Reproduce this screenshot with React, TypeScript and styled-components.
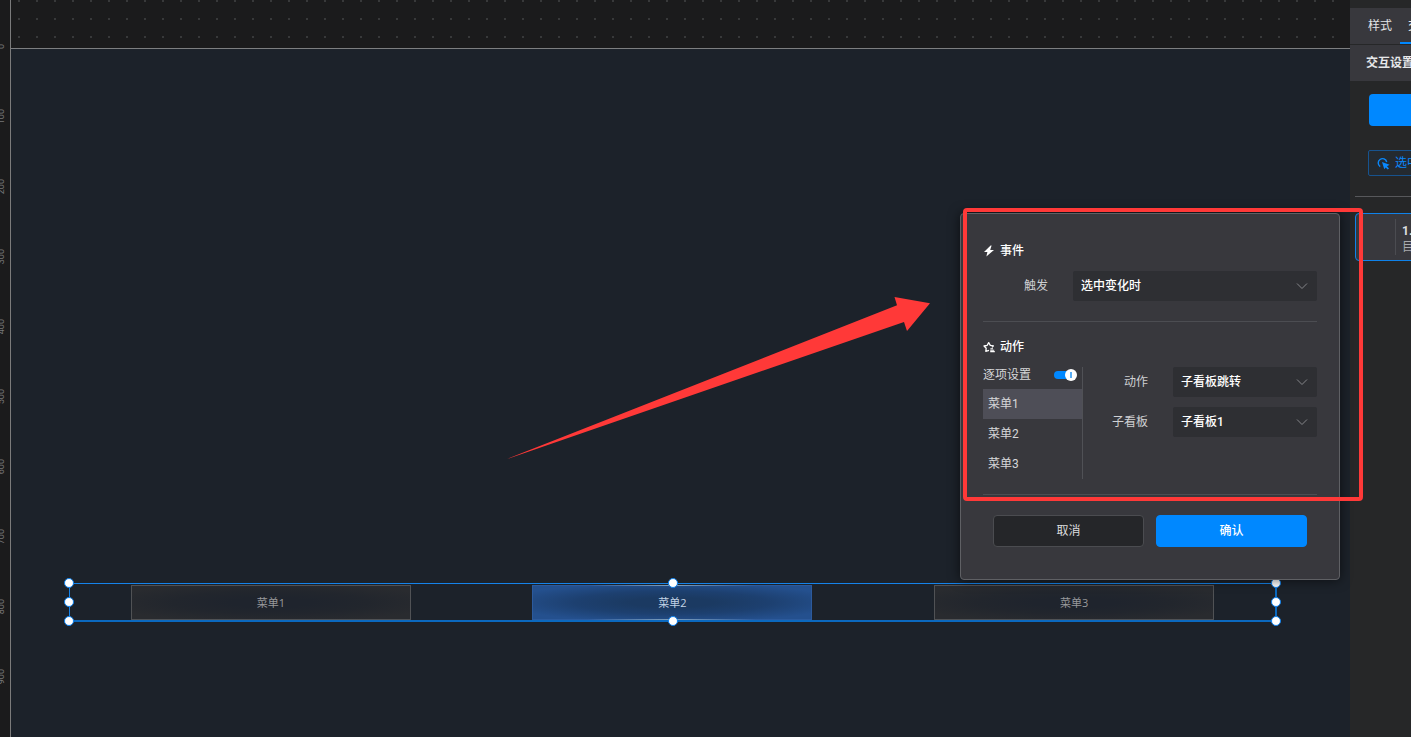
import React, { useState } from "react";
import styled, { createGlobalStyle } from "styled-components";

const GlobalStyle = createGlobalStyle`
  * { box-sizing: border-box; }
  body {
    margin: 0;
    background: #1b1b1c;
    color: #d6d7d9;
    font: 12px/16px Roboto, "Noto Sans CJK SC", sans-serif;
  }
  button, select { font: inherit; }
`;

const Page = styled.div`
  position: relative;
  display: flex;
  min-height: 100vh;
  overflow: hidden;
`;

const Ruler = styled.div`
  flex: 0 0 11px;
  height: 100vh;
  padding-top: 12px;
  overflow: hidden;
  border-right: 1px solid #7b7b7b;
  background: #1b1b1c;
`;

const Tick = styled.div`
  display: flex;
  align-items: center;
  height: 70px;
  margin-left: -3px;
  color: #77787a;
  font-size: 9px;
  line-height: 9px;
`;

const TickLabel = styled.span`
  writing-mode: vertical-rl;
  transform: rotate(180deg);
`;

const Canvas = styled.main`
  position: relative;
  display: flex;
  flex: 1;
  flex-direction: column;
  min-width: 0;
`;

const DotGrid = styled.div`
  height: 48px;
  background-color: #1b1b1c;
  background-image: conic-gradient(from 270deg at 2px 2px, #38393a 90deg, transparent 0);
  background-position: 7px 0;
  background-size: 18px 18px;
`;

const Stage = styled.div`
  flex: 1;
  border-top: 1px solid #7d7e80;
  background: #1c222a;
`;

const Selection = styled.div`
  position: absolute;
  top: 583px;
  left: 58px;
  right: 73px;
  display: grid;
  grid-template-columns: repeat(3, 1fr);
  height: 39px;
  padding-top: 1px;
  border: solid #0b69bf;
  border-width: 1px 2px 2px 1px;
  border-top-color: #1583ea;
  border-left-color: #1583ea;
`;

const Cell = styled.div`
  display: flex;
  justify-content: center;
`;

const MenuNode = styled.div<{ $active?: boolean }>`
  display: flex;
  align-items: center;
  justify-content: center;
  width: 280px;
  height: 35px;
  border: 1px solid ${(p) => (p.$active ? "#2c5a9c" : "#505255")};
  ${(p) => p.$active && "border-image: linear-gradient(90deg, #2c5a9c 20%, #7fa0bd 50%, #2c5a9c 80%) 1;"}
  background: ${(p) =>
    p.$active
      ? "radial-gradient(closest-side, #1b3a62 30%, #1d4070 70%, #24508e 120%)"
      : "radial-gradient(closest-side, #1f242d 30%, #22262d 70%, #292b2f 120%)"};
  color: ${(p) => (p.$active ? "#c3d4e6" : "#98999b")};
  font-family: "Open Sans", "Noto Sans CJK SC", sans-serif;
  font-size: 11px;
`;

const Handles = styled.div`
  position: absolute;
  inset: -1px;
`;

const Handle = styled.i<{ $x: string; $y: string }>`
  position: absolute;
  left: ${(p) => p.$x};
  top: ${(p) => p.$y};
  width: 10px;
  height: 10px;
  margin: -5px;
  border: 1px solid #0c80ee;
  border-radius: 50%;
  background: #fff;
`;

const Sidebar = styled.aside`
  flex: 0 0 61px;
  padding-top: 8px;
  overflow: hidden;
  background: #262728;
  white-space: nowrap;
`;

const Tabs = styled.div`
  display: flex;
  height: 37px;
  padding-left: 10px;
  border-bottom: 1px solid #262728;
  background: #38383d;
`;

const Tab = styled.button<{ $active?: boolean }>`
  flex: none;
  padding: 2px 8px 0;
  border: 0;
  border-bottom: 2px solid ${(p) => (p.$active ? "#0088ff" : "transparent")};
  background: none;
  color: #e3e4e6;
`;

const SideTitle = styled.h2`
  margin: 0;
  padding: 10px 16px;
  background: #38383d;
  color: #e6e7e9;
  font-size: 12px;
  font-weight: 700;
  line-height: 16px;
`;

const SideBody = styled.div`
  width: 300px;
  padding: 13px 18px 20px 19px;
`;

const AddButton = styled.button`
  display: block;
  width: 100%;
  height: 32px;
  border: 0;
  border-radius: 4px;
  background: #0088ff;
`;

const EventTag = styled.button`
  display: flex;
  align-items: center;
  gap: 5px;
  height: 26px;
  margin: 24px 0 0 -1px;
  padding: 0 8px;
  border: 1px solid #17538e;
  border-radius: 2px;
  background: #242a30;
  color: #0a88fb;
`;

const SideList = styled.div`
  width: 320px;
  margin-left: 5px;
  padding-top: 16px;
  border-top: 1px solid #57585b;
`;

const ActionCard = styled.div`
  display: flex;
  height: 48px;
  padding: 5px 0;
  border: 1px solid #0f82ea;
  border-radius: 4px;
  background: #38383d;
`;

const CardGrip = styled.div`
  width: 40px;
  border-right: 1px solid #4b4c51;
`;

const CardText = styled.div`
  padding: 4px 6px;
  color: #a9aaad;
  line-height: 16px;
`;

const CardTitle = styled.div`
  color: #dedfe1;
  font-weight: 700;
`;

const Dialog = styled.form`
  position: absolute;
  top: 213px;
  right: 71px;
  width: 380px;
  padding: 29px 22px 32px;
  border: 1px solid #5f6064;
  border-radius: 4px;
  background: #38383d;
  box-shadow: 0 0 12px rgba(0, 0, 0, 0.6);
`;

const Section = styled.section`
  padding-bottom: 20px;
  border-bottom: 1px solid #4c4d52;

  & + & {
    padding: 17px 0 15px;
  }
`;

const SectionTitle = styled.h3`
  display: flex;
  align-items: center;
  gap: 5px;
  margin: 0 0 12px;
  color: #fff;
  font-size: 12px;
  font-weight: 500;
  line-height: 16px;
`;

const Columns = styled.div`
  display: flex;
`;

const ItemColumn = styled.div`
  width: 100px;
  border-right: 1px solid #505156;
`;

const SwitchRow = styled.label`
  display: flex;
  align-items: center;
  justify-content: space-between;
  height: 22px;
  padding: 0 5px 6px 0;
`;

const Switch = styled.input`
  position: relative;
  width: 23px;
  height: 12px;
  margin: 0;
  appearance: none;

  &::before {
    content: "";
    position: absolute;
    inset: 2px 4px 2px 0;
    border-radius: 4px;
    background: #0088ff;
  }

  &::after {
    content: "";
    position: absolute;
    top: 0;
    right: 0;
    width: 12px;
    height: 12px;
    border-radius: 50%;
    background: linear-gradient(#58adf5, #58adf5) center / 2px 6px no-repeat #fff;
  }
`;

const Item = styled.button<{ $active: boolean }>`
  display: block;
  width: 100%;
  height: 30px;
  padding: 0 5px;
  border: 0;
  background: ${(p) => (p.$active ? "#4e4e57" : "none")};
  color: #d6d7d9;
  text-align: left;
`;

const Fields = styled.div`
  display: grid;
  flex: 1;
  gap: 10px;
  align-content: start;
`;

const Field = styled.div`
  display: flex;
  gap: 25px;
  align-items: center;
  justify-content: flex-end;
`;

const FieldLabel = styled.label`
  color: #cfd0d3;
`;

const SelectBox = styled.span<{ $wide?: boolean }>`
  position: relative;
  width: ${(p) => (p.$wide ? "244px" : "144px")};

  svg {
    position: absolute;
    top: 11px;
    right: 9px;
    pointer-events: none;
  }
`;

const Select = styled.select`
  display: block;
  width: 100%;
  height: 30px;
  padding: 0 8px;
  appearance: none;
  border: 0;
  border-radius: 2px;
  background: #2e2f33;
  color: #fff;
  font-weight: 500;
`;

const Actions = styled.div`
  display: grid;
  grid-template-columns: 1fr 1fr;
  gap: 12px;
  padding: 20px 10px 0;
`;

const Button = styled.button<{ $primary?: boolean }>`
  height: 32px;
  border: 1px solid ${(p) => (p.$primary ? "#0088ff" : "#4b4c50")};
  border-radius: 4px;
  background: ${(p) => (p.$primary ? "#0088ff" : "#252629")};
  color: ${(p) => (p.$primary ? "#fff" : "#dcdddf")};
  font-weight: ${(p) => (p.$primary ? 500 : 400)};
`;

const Highlight = styled.div`
  position: absolute;
  top: 208px;
  right: 48px;
  width: 400px;
  height: 293px;
  border: 4px solid #ff3938;
  border-radius: 4px;
  pointer-events: none;
`;

const Arrow = styled.svg`
  position: absolute;
  top: 290px;
  right: 480px;
  pointer-events: none;
`;

const BoltIcon = () => (
  <svg width="12" height="12" viewBox="0 0 12 12" fill="#fff" aria-hidden="true">
    <path d="M7.6 0.6 1 7h3.4L3.4 11.4 11 5H7.2L8.6 0.6Z" />
  </svg>
);

const StarIcon = () => (
  <svg width="12" height="12" viewBox="0 0 12 12" fill="none" stroke="#fff" strokeWidth="1.3" aria-hidden="true">
    <path d="M6 9.3 2.8 10.3 3.2 7.2 1 5 4.2 4.3 5.7 1.6 7.3 4.3 10.4 4.9 9 6.4" strokeLinejoin="round" />
    <path d="M7.4 7.8h2.6M7.2 9.2h4M7.2 10.6h4.6" strokeWidth="1.1" />
  </svg>
);

const PickIcon = () => (
  <svg width="13" height="14" viewBox="0 0 13 14" aria-hidden="true">
    <path d="M3.2 10.6A4.3 4.3 0 1 1 9.7 6" fill="none" stroke="#0a88fb" strokeWidth="1.4" />
    <path d="m5 6 7.6 2.8-2.6 1.4 2 2.2-1.3 1.2-2-2.2L7.3 13.2Z" fill="#0a88fb" />
  </svg>
);

const Chevron = () => (
  <svg width="12" height="8" viewBox="0 0 12 8" fill="none" stroke="#85868a" aria-hidden="true">
    <path d="m1 1.5 5 5 5-5" />
  </svg>
);

const TICKS = [0, 100, 200, 300, 400, 500, 600, 700, 800, 900];
const MENUS = ["菜单1", "菜单2", "菜单3"];
const HANDLES = [
  ["0%", "0%"],
  ["50%", "0%"],
  ["100%", "0%"],
  ["0%", "50%"],
  ["100%", "50%"],
  ["0%", "100%"],
  ["50%", "100%"],
  ["100%", "100%"],
];

type SelectFieldProps = { id: string; label: string; value: string; wide?: boolean };

const SelectField = ({ id, label, value, wide }: SelectFieldProps) => (
  <Field>
    <FieldLabel htmlFor={id}>{label}</FieldLabel>
    <SelectBox $wide={wide}>
      <Select id={id} defaultValue={value}>
        <option>{value}</option>
      </Select>
      <Chevron />
    </SelectBox>
  </Field>
);

export default function App() {
  const [current, setCurrent] = useState(0);
  const [perItem, setPerItem] = useState(true);

  return (
    <Page>
      <GlobalStyle />
      <Ruler>
        {TICKS.map((t) => (
          <Tick key={t}>
            <TickLabel>{t}</TickLabel>
          </Tick>
        ))}
      </Ruler>
      <Canvas>
        <DotGrid />
        <Stage />
        <Selection>
          {MENUS.map((m, i) => (
            <Cell key={m}>
              <MenuNode $active={i === 1}>{m}</MenuNode>
            </Cell>
          ))}
          <Handles>
            {HANDLES.map(([x, y]) => (
              <Handle key={x + y} $x={x} $y={y} />
            ))}
          </Handles>
        </Selection>
      </Canvas>
      <Sidebar>
        <Tabs>
          <Tab>样式</Tab>
          <Tab $active>交互</Tab>
        </Tabs>
        <SideTitle>交互设置</SideTitle>
        <SideBody>
          <AddButton aria-label="添加" />
          <EventTag>
            <PickIcon />
            选中变化时
          </EventTag>
        </SideBody>
        <SideList>
          <ActionCard>
            <CardGrip />
            <CardText>
              <CardTitle>1.</CardTitle>
              <div>目标</div>
            </CardText>
          </ActionCard>
        </SideList>
      </Sidebar>
      <Dialog onSubmit={(e: React.FormEvent) => e.preventDefault()}>
        <Section>
          <SectionTitle>
            <BoltIcon />
            事件
          </SectionTitle>
          <SelectField id="trigger" label="触发" value="选中变化时" wide />
        </Section>
        <Section>
          <SectionTitle>
            <StarIcon />
            动作
          </SectionTitle>
          <Columns>
            <ItemColumn>
              <SwitchRow>
                逐项设置
                <Switch
                  type="checkbox"
                  role="switch"
                  checked={perItem}
                  onChange={() => setPerItem(!perItem)}
                />
              </SwitchRow>
              {MENUS.map((m, i) => (
                <Item key={m} type="button" $active={i === current} onClick={() => setCurrent(i)}>
                  {m}
                </Item>
              ))}
            </ItemColumn>
            <Fields>
              <SelectField id="action" label="动作" value="子看板跳转" />
              <SelectField id="board" label="子看板" value="子看板1" />
            </Fields>
          </Columns>
        </Section>
        <Actions>
          <Button type="button">取消</Button>
          <Button $primary>确认</Button>
        </Actions>
      </Dialog>
      <Highlight />
      <Arrow width="424" height="172" viewBox="0 0 424 172" aria-hidden="true">
        <path d="M0 169 390 15.3 387.5 7 423 13.3 400 41 397 32Z" fill="#ff3938" />
      </Arrow>
    </Page>
  );
}
